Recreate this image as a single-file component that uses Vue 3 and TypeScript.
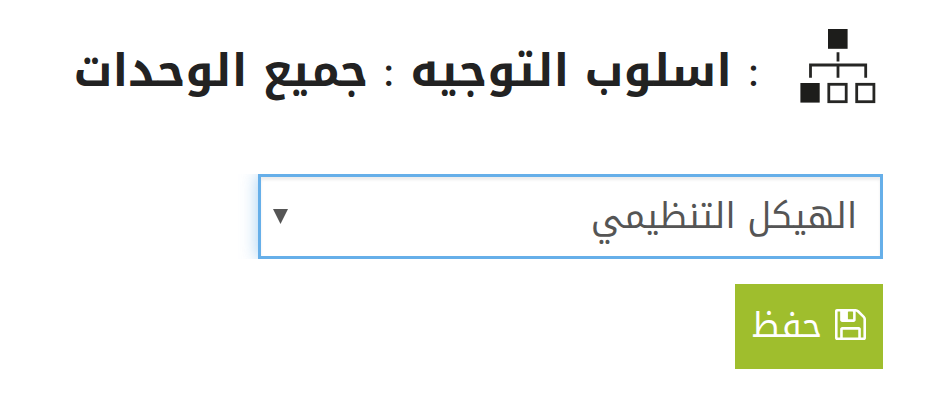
<script setup lang="ts">
import { ref } from 'vue'

const method = ref<string>('الهيكل التنظيمي')
</script>

<template>
  <main class="page" dir="rtl">
    <header class="heading">
      <svg class="org-icon" viewBox="0 0 78 76" width="78" height="76" aria-hidden="true">
        <rect x="29" y="1" width="19.6" height="19.8" fill="#1d1d1b" />
        <rect x="1.4" y="55" width="19.3" height="19.6" fill="#1d1d1b" />
        <g fill="none" stroke="#262624" stroke-width="2.8">
          <rect x="29.8" y="56.3" width="17.4" height="17.4" />
          <rect x="57.7" y="56.3" width="17.2" height="17.4" />
          <path d="M39 24.3V33.5M11.5 49.8V37H66.7V49.8M39 37V49.8" />
        </g>
      </svg>
      <h1 class="title">
        <span class="colon">:</span><b class="label">اسلوب التوجيه</b><span class="colon">:</span><b class="value">جميع الوحدات</b>
      </h1>
    </header>
    <div class="select-clip">
      <div class="select" role="combobox" tabindex="0">
        <span class="selected">{{ method }}</span>
        <svg class="arrow" width="15" height="15" viewBox="0 0 15 15" aria-hidden="true">
          <path d="M0 0H15L7.5 15Z" fill="#555" />
        </svg>
      </div>
    </div>
    <button class="save" type="button">
      <svg class="save-icon" viewBox="128 128 1536 1536" width="31" height="31" aria-hidden="true">
        <path fill="#fff" d="M512 1536h768v-384H512v384zm896 0h128V640q0-14-10-38.5t-20-34.5l-281-281q-10-10-34-20t-39-10v416q0 40-28 68t-68 28H480q-40 0-68-28t-28-68V256H256v1280h128v-416q0-40 28-68t68-28h832q40 0 68 28t28 68v416zM1024 608V288q0-13-9.5-22.5T992 256H800q-13 0-22.5 9.5T768 288v320q0 13 9.5 22.5T800 640h192q13 0 22.5-9.5T1024 608zm640 32v928q0 40-28 68t-68 28H224q-40 0-68-28t-28-68V224q0-40 28-68t68-28h928q40 0 88 20t76 48l280 280q28 28 48 76t20 88z" />
      </svg>
      <span class="save-text">حفظ</span>
    </button>
  </main>
</template>

<style>
body {
  background: #fff;
}
</style>

<style scoped>
.page {
  box-sizing: border-box;
  width: 940px;
  height: 402px;
  padding: 28px 57px 0 0;
  overflow: hidden;
  font-family: "Noto Kufi Arabic", "Droid Arabic Kufi", "Noto Sans Arabic", Roboto, sans-serif;
}
.heading {
  display: flex;
  align-items: flex-start;
  height: 146px;
  padding-right: 6px;
}
.org-icon {
  flex: none;
}
.title {
  display: flex;
  align-items: baseline;
  margin: 0 40px 0 0;
  font-size: 45px;
  line-height: 86px;
  font-weight: 400;
  color: #222;
  white-space: nowrap;
}
.colon {
  display: flex;
  justify-content: center;
  width: 11px;
  font-family: "Liberation Serif", serif;
}
.label {
  margin: 0 16px 0 16px;
}
.value {
  margin-right: 15px;
}
.select-clip {
  width: 645px;
  height: 85px;
  overflow: hidden;
}
.select {
  box-sizing: border-box;
  display: flex;
  align-items: center;
  justify-content: space-between;
  width: 625px;
  height: 85px;
  padding: 0 23px 0 12px;
  border: 3px solid #66afe9;
  background: #fff;
  box-shadow: inset 0 3px 3px rgba(0, 0, 0, 0.075), 0 0 16px rgba(102, 175, 233, 0.6);
}
.selected {
  font-size: 35px;
  line-height: 79px;
  color: #555;
}
.save {
  box-sizing: border-box;
  display: flex;
  align-items: center;
  gap: 13px;
  width: 148px;
  height: 85px;
  margin-top: 25px;
  padding: 0 17px 4px 0;
  border: 0;
  background: #9fbe2d;
  color: #fff;
  font-family: inherit;
  font-size: 34.5px;
  line-height: 78px;
}
.save-icon {
  flex: none;
}
.save-text {
  padding-top: 3px;
}
</style>
